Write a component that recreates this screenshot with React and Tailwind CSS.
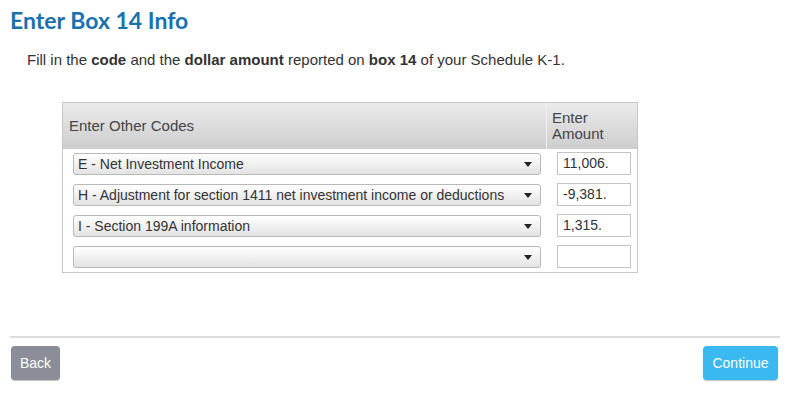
import React from "react";

const rows = [
  { code: "E - Net Investment Income", amt: "11,006." },
  { code: "H - Adjustment for section 1411 net investment income or deductions", amt: "-9,381." },
  { code: "I - Section 199A information", amt: "1,315." },
  { code: "", amt: "" },
];

function Select({ value }) {
  return (
    <div className="flex h-[22px] w-[468px] items-center justify-between rounded-[3px] border border-[#b9b9b9] bg-gradient-to-b from-[#ffffff] to-[#e3e3e3] pl-[4px] pr-[8px] text-[14px] text-[#333]">
      <span className="whitespace-nowrap leading-none">{value}</span>
      <svg width="8" height="5" viewBox="0 0 8 5" className="mt-[2px]">
        <path d="M0 0 L8 0 L4 5 Z" fill="#222" />
      </svg>
    </div>
  );
}

export default function App() {
  return (
    <div className="h-[402px] w-[803px] bg-white" style={{ fontFamily: '"Liberation Sans", Arial, sans-serif' }}>
      <div className="px-[10px] pt-[5px]">
        <h1 className="text-[23px] font-bold leading-[30px] text-[#1a72ad]" style={{ fontFamily: '"Lato", "Open Sans", sans-serif' }}>
          Enter Box 14 Info
        </h1>
        <p className="mt-[16px] pl-[17px] text-[15px] leading-[17px] text-[#333]">
          Fill in the <b>code</b> and the <b>dollar amount</b> reported on <b>box 14</b> of your Schedule K-1.
        </p>
        <div className="ml-[52px] mt-[34px] w-[576px] border border-[#c8c8c8]">
          <div className="flex h-[46px] bg-gradient-to-b from-[#ebebeb] to-[#cdcdcd] text-[15px] text-[#444]">
            <div className="flex w-[484px] items-center border-r border-[#f2f2f2] pl-[6px] pt-[1px]">Enter Other Codes</div>
            <div className="flex flex-col justify-center pl-[5px] leading-[16px]">
              <span>Enter</span>
              <span>Amount</span>
            </div>
          </div>
          <div className="flex flex-col gap-[8px] pb-[4px] pt-[3px]">
            {rows.map((r, i) => (
              <div key={i} className="flex h-[23px] items-center">
                <div className="ml-[10px]">
                  <Select value={r.code} />
                </div>
                <div className="ml-[16px] flex h-[23px] w-[74px] items-center border border-[#c4c4c4] bg-white pl-[5px] text-[14px] text-[#333]">
                  {r.amt}
                </div>
              </div>
            ))}
          </div>
        </div>
        <div className="mt-[63px] h-[2px] w-[770px] bg-[#dcdcdc]" />
        <div className="mt-[8px] flex w-[770px] items-center justify-between">
          <button className="ml-[1px] h-[34px] w-[49px] rounded-[4px] bg-[#8b8e98] text-[14px] text-white shadow-[0_1px_1px_rgba(0,0,0,0.25)]">
            Back
          </button>
          <button className="mr-[2px] h-[34px] w-[75px] rounded-[4px] bg-[#3ab8f0] text-[14px] text-white shadow-[0_1px_1px_rgba(0,0,0,0.25)]">
            Continue
          </button>
        </div>
      </div>
    </div>
  );
}
